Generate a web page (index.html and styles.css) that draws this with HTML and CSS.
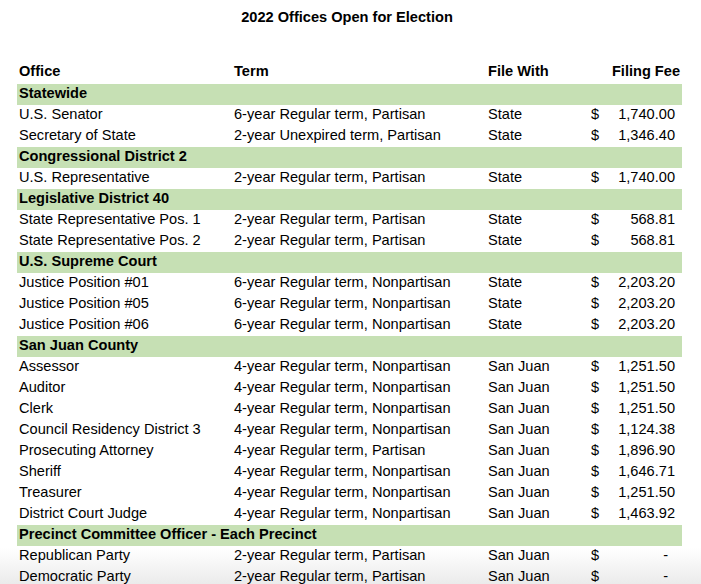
FILE: index.html
```html
<!DOCTYPE html>
<html lang="en">
<head>
<meta charset="utf-8">
<title>2022 Offices Open for Election</title>
<link rel="stylesheet" href="styles.css">
</head>
<body>
<div class="page">
  <h1 class="title">2022 Offices Open for Election</h1>
  <table class="offices">
    <colgroup>
      <col class="c-office"><col class="c-term"><col class="c-file"><col class="c-cur"><col class="c-fee">
    </colgroup>
    <thead>
      <tr class="head">
        <th>Office</th><th>Term</th><th>File With</th><th colspan="2" class="fee-h">Filing Fee</th>
      </tr>
    </thead>
    <tbody>
      <tr class="group"><td colspan="5">Statewide</td></tr>
      <tr><td>U.S. Senator</td><td>6-year Regular term, Partisan</td><td>State</td><td class="cur">$</td><td class="fee">1,740.00</td></tr>
      <tr><td>Secretary of State</td><td>2-year Unexpired term, Partisan</td><td>State</td><td class="cur">$</td><td class="fee">1,346.40</td></tr>
      <tr class="group"><td colspan="5">Congressional District 2</td></tr>
      <tr><td>U.S. Representative</td><td>2-year Regular term, Partisan</td><td>State</td><td class="cur">$</td><td class="fee">1,740.00</td></tr>
      <tr class="group"><td colspan="5">Legislative District 40</td></tr>
      <tr><td>State Representative Pos. 1</td><td>2-year Regular term, Partisan</td><td>State</td><td class="cur">$</td><td class="fee">568.81</td></tr>
      <tr><td>State Representative Pos. 2</td><td>2-year Regular term, Partisan</td><td>State</td><td class="cur">$</td><td class="fee">568.81</td></tr>
      <tr class="group"><td colspan="5">U.S. Supreme Court</td></tr>
      <tr><td>Justice Position #01</td><td>6-year Regular term, Nonpartisan</td><td>State</td><td class="cur">$</td><td class="fee">2,203.20</td></tr>
      <tr><td>Justice Position #05</td><td>6-year Regular term, Nonpartisan</td><td>State</td><td class="cur">$</td><td class="fee">2,203.20</td></tr>
      <tr><td>Justice Position #06</td><td>6-year Regular term, Nonpartisan</td><td>State</td><td class="cur">$</td><td class="fee">2,203.20</td></tr>
      <tr class="group"><td colspan="5">San Juan County</td></tr>
      <tr><td>Assessor</td><td>4-year Regular term, Nonpartisan</td><td>San Juan</td><td class="cur">$</td><td class="fee">1,251.50</td></tr>
      <tr><td>Auditor</td><td>4-year Regular term, Nonpartisan</td><td>San Juan</td><td class="cur">$</td><td class="fee">1,251.50</td></tr>
      <tr><td>Clerk</td><td>4-year Regular term, Nonpartisan</td><td>San Juan</td><td class="cur">$</td><td class="fee">1,251.50</td></tr>
      <tr><td>Council Residency District 3</td><td>4-year Regular term, Nonpartisan</td><td>San Juan</td><td class="cur">$</td><td class="fee">1,124.38</td></tr>
      <tr><td>Prosecuting Attorney</td><td>4-year Regular term, Partisan</td><td>San Juan</td><td class="cur">$</td><td class="fee">1,896.90</td></tr>
      <tr><td>Sheriff</td><td>4-year Regular term, Nonpartisan</td><td>San Juan</td><td class="cur">$</td><td class="fee">1,646.71</td></tr>
      <tr><td>Treasurer</td><td>4-year Regular term, Nonpartisan</td><td>San Juan</td><td class="cur">$</td><td class="fee">1,251.50</td></tr>
      <tr><td>District Court Judge</td><td>4-year Regular term, Nonpartisan</td><td>San Juan</td><td class="cur">$</td><td class="fee">1,463.92</td></tr>
      <tr class="group"><td colspan="5">Precinct Committee Officer - Each Precinct</td></tr>
      <tr><td>Republican Party</td><td>2-year Regular term, Partisan</td><td>San Juan</td><td class="cur">$</td><td class="fee dash">-</td></tr>
      <tr><td>Democratic Party</td><td>2-year Regular term, Partisan</td><td>San Juan</td><td class="cur">$</td><td class="fee dash">-</td></tr>
    </tbody>
  </table>
</div>
</body>
</html>
```
FILE: styles.css
```css
html, body {
  margin: 0;
  padding: 0;
}
body {
  font-family: "Liberation Sans", Arial, sans-serif;
  font-size: 14.6px;
  color: #000;
  background: #fff;
}
.page {
  min-height: 584px;
  height: 584px;
  overflow: hidden;
  padding: 7px 0 0 17px;
  box-sizing: border-box;
  background: linear-gradient(to bottom, #ffffff 0, #ffffff 548px, #ebebeb 584px);
}
.title {
  width: 665px;
  margin: 0;
  padding-right: 5px;
  box-sizing: border-box;
  height: 54px;
  line-height: 21px;
  font-size: 14.6px;
  font-weight: bold;
  text-align: center;
}
.offices {
  width: 665px;
  table-layout: fixed;
  border-collapse: collapse;
  border-spacing: 0;
}
.c-office { width: 215px; }
.c-term { width: 254px; }
.c-file { width: 100px; }
.c-cur { width: 19px; }
.c-fee { width: 77px; }
.offices th,
.offices td {
  padding: 0 0 3px 2px;
  height: 18px;
  line-height: 18px;
  white-space: nowrap;
  text-align: left;
  vertical-align: top;
  font-weight: normal;
}
.offices .head th {
  font-weight: bold;
  padding-top: 1px;
  padding-bottom: 4px;
}
.offices .head .fee-h {
  text-align: right;
  padding-right: 2px;
}
.group td {
  background: #c6e0b4;
  font-weight: bold;
}
.offices td.cur {
  padding-left: 5px;
}
.offices td.fee {
  text-align: right;
  padding-right: 7px;
}
.offices td.dash {
  padding-right: 14px;
}
```
